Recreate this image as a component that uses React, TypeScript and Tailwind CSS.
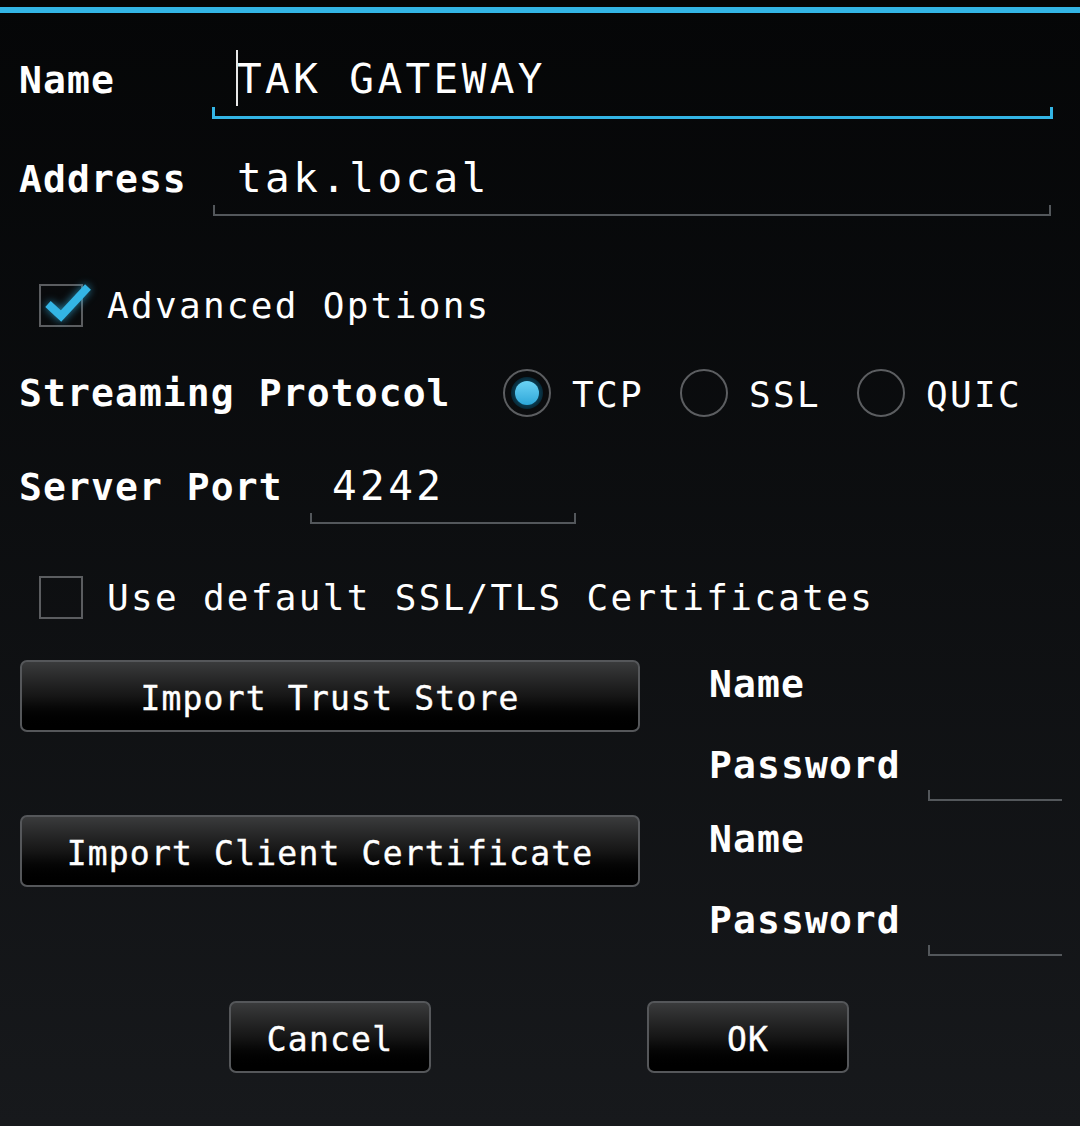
import React from "react";

const label = "text-[38px] leading-[48px] font-bold tracking-[1.1px] text-white";
const body = "text-[36px] leading-[43px] tracking-[2.3px] text-white";
const entry = "text-[41px] leading-[48px] tracking-[3.4px] text-white whitespace-pre";

const Bracket = ({ focused = false }: { focused?: boolean }) =>
	focused ? (
		<div className="mt-[4px] h-[12px] border-x-[3px] border-b-[3px] border-[#33b5e5]" />
	) : (
		<div className="mt-[3px] h-[11px] border-x-2 border-b-2 border-[#53575b]" />
	);

const CheckBox = ({ checked }: { checked: boolean }) => (
	<div className="relative h-[43px] w-[44px] shrink-0 border-2 border-[#5b5d60]">
		{checked ? (
			<svg
				className="absolute -top-[3px] -left-[2px] overflow-visible drop-shadow-[0_0_4px_rgba(51,181,229,0.75)]"
				width="52"
				height="40"
				viewBox="0 0 52 40"
			>
				<polyline
					points="9,21 22,33 49,4"
					fill="none"
					stroke="#33b5e5"
					strokeWidth="8"
					strokeLinejoin="miter"
				/>
			</svg>
		) : null}
	</div>
);

const Radio = ({ text, selected }: { text: string; selected?: boolean }) => (
	<div className="flex w-[177px] items-center gap-[21px]">
		<div className="flex h-[48px] w-[48px] shrink-0 items-center justify-center rounded-full border-2 border-[#5c5e61]">
			{selected ? (
				<div className="flex h-[32px] w-[32px] items-center justify-center rounded-full bg-[radial-gradient(circle,#0e4a63_40%,#062330_75%,#030a0e_100%)]">
					<div className="h-[24px] w-[24px] rounded-full bg-gradient-to-b from-[#6ad3f5] to-[#2ba7d9]" />
				</div>
			) : null}
		</div>
		<span className={body + " pt-[3px]"}>{text}</span>
	</div>
);

const Button = ({ text, className = "" }: { text: string; className?: string }) => (
	<button
		className={`flex h-[72px] items-center justify-center rounded-[7px] border-2 border-[#55575a] bg-gradient-to-b from-[#3a3b3c] via-[#161616] to-[#000000] pt-[5px] text-[33px] tracking-[1.2px] text-white [-webkit-text-stroke:0.4px_#fff] ${className}`}
	>
		{text}
	</button>
);

const CredentialBlock = ({ text }: { text: string }) => (
	<div className="flex items-start">
		<Button text={text} className="w-[620px] shrink-0" />
		<div className="ml-[69px] flex flex-1 flex-col pr-[18px]">
			<span className={label}>Name</span>
			<div className="mt-[32px] flex items-baseline">
				<span className={label + " w-[219px] shrink-0"}>Password</span>
				<div className="flex flex-1 flex-col">
					<span className={entry}> </span>
					<div className="mt-[2px] h-[11px] border-b-2 border-l-2 border-[#53575b]" />
				</div>
			</div>
		</div>
	</div>
);

export default function App() {
	return (
		<div className="h-[1126px] w-full overflow-hidden bg-gradient-to-b from-[#050607] to-[#17191c] font-['DejaVu_Sans_Mono',monospace] pt-[7px]">
			<div className="h-[6px] bg-[#33b5e5]" />

			{/* name */}
			<div className="mt-[42px] flex items-baseline pr-[27px] pl-[19px]">
				<span className={label + " w-[193px] shrink-0"}>Name</span>
				<div className="flex flex-1 flex-col">
					<div className="relative pl-[25px]">
						<span className="absolute top-[-5px] left-[24px] h-[56px] w-[2px] bg-[#e8e8e8]" />
						<span className={entry}>TAK GATEWAY</span>
					</div>
					<Bracket focused />
				</div>
			</div>

			{/* address */}
			<div className="mt-[35px] flex items-baseline pr-[29px] pl-[19px]">
				<span className={label + " w-[194px] shrink-0"}>Address</span>
				<div className="flex flex-1 flex-col">
					<span className={entry + " pl-[24px]"}>tak.local</span>
					<Bracket />
				</div>
			</div>

			<div className="mt-[68px] flex items-center gap-[24px] pl-[39px]">
				<CheckBox checked />
				<span className={body}>Advanced Options</span>
			</div>

			<div className="mt-[42px] flex h-[48px] items-center pl-[19px]">
				<span className={label + " w-[484px] shrink-0"}>Streaming Protocol</span>
				<Radio text="TCP" selected />
				<Radio text="SSL" />
				<Radio text="QUIC" />
			</div>

			<div className="mt-[45px] flex items-baseline pl-[19px]">
				<span className={label + " w-[291px] shrink-0"}>Server Port</span>
				<div className="flex w-[266px] flex-col">
					<span className={entry + " pl-[22px]"}>4242</span>
					<Bracket />
				</div>
			</div>

			<div className="mt-[52px] flex items-center gap-[24px] pl-[39px]">
				<CheckBox checked={false} />
				<span className={body}>Use default SSL/TLS Certificates</span>
			</div>

			<div className="mt-[41px] flex flex-col gap-[14px] pl-[20px]">
				<CredentialBlock text="Import Trust Store" />
				<CredentialBlock text="Import Client Certificate" />
			</div>

			<div className="mt-[45px] flex gap-[216px] pl-[229px]">
				<Button text="Cancel" className="w-[202px]" />
				<Button text="OK" className="w-[202px]" />
			</div>
		</div>
	);
}
